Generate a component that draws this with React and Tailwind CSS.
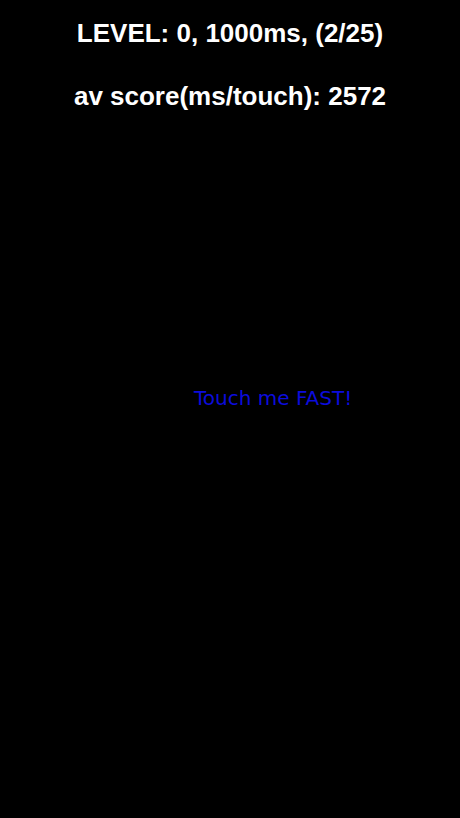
export default function App() {
  return (
    <div className="relative w-[460px] h-[818px] bg-black overflow-hidden">
      <div className="flex flex-col items-center pt-[16px] gap-[29px] text-white font-bold text-[26px] leading-[34px] font-['Liberation_Sans',Arial,sans-serif]">
        <div>LEVEL: 0, 1000ms, (2/25)</div>
        <div>av score(ms/touch): 2572</div>
      </div>
      <div className="absolute left-[194px] top-[385px] text-[20px] leading-[26px] text-[#0c0cdc] font-['DejaVu_Sans',sans-serif]">
        Touch me FAST!
      </div>
    </div>
  );
}
